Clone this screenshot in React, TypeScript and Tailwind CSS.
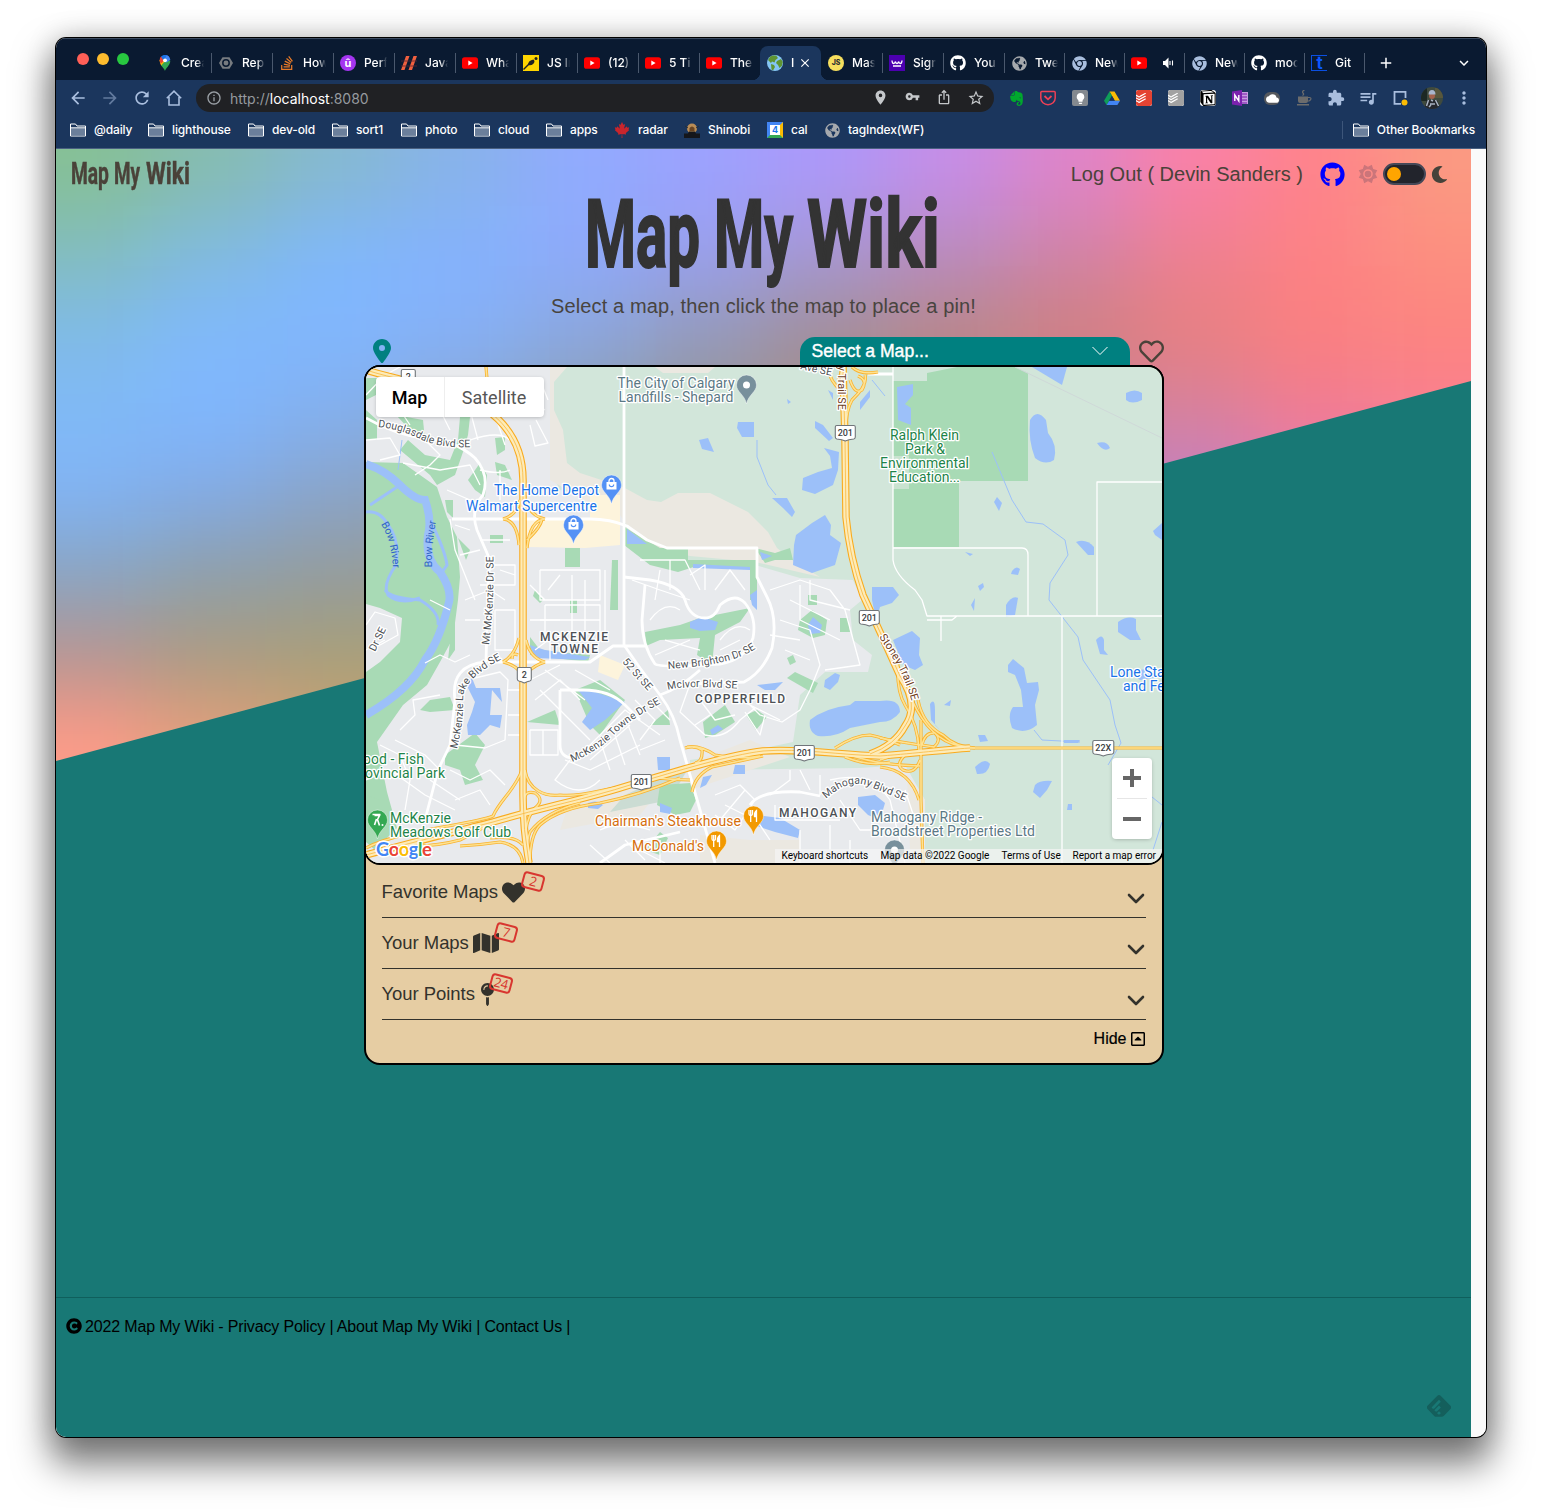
import React from "react";
import {
  FaGithub, FaHeart, FaRegHeart, FaMap, FaMapPin, FaCopyright, FaMoon, FaStackOverflow,
  FaRegCaretSquareUp, FaChrome, FaGlobeAmericas, FaCanadianMapleLeaf,
} from "react-icons/fa";
import { FaLocationDot } from "react-icons/fa6";
import {
  MdArrowBack, MdArrowForward, MdRefresh, MdInfoOutline, MdLocationOn, MdVpnKey,
  MdIosShare, MdStarOutline, MdExtension, MdQueueMusic, MdMoreVert, MdClose, MdAdd, MdExpandMore,
  MdCloud, MdLightbulb,
} from "react-icons/md";
import { SiEvernote, SiTodoist, SiNotion, SiFeedly } from "react-icons/si";

const YouTube = () => (
  <svg viewBox="0 0 16 16" className="size-4"><rect y="2.2" width="16" height="11.6" rx="2.6" fill="#f00" /><path d="M6.3 5.6v4.8L10.6 8z" fill="#fff" /></svg>
);
const Github = () => <FaGithub className="size-4 text-white" />;
const ChromeIcon = () => <FaChrome className="size-[15px] text-[#a9bede]" />;
const Globe = () => <FaGlobeAmericas className="size-[15px] text-[#a6a9ad]" />;

const MapsPin = () => (
  <svg viewBox="0 0 16 16" className="size-4">
    <path d="M8 16c.5-2.600 5.200-5.500 5.300-10.200L8 5.500 3.900 10.200C5.600 12.300 7.500 14 8 16z" fill="#34a853" />
    <path d="M2.700 5.300C2.700 7.500 3.200 9 4.200 10.500L10 4 5.500 1z" fill="#fbbc04" />
    <path d="M2.700 5.300C2.700 3.500 3.200 2.400 4 1.600L8 5 4 8.500C3 7.500 2.700 6.500 2.700 5.300z" fill="#ea4335" />
    <path d="M4 1.600C6-.6 10-.5 12 1.700L7 6.500z" fill="#1a73e8" />
    <path d="M9.500.3c2 .5 3.400 2 3.800 4.600L9.500 7.500 7.500 5z" fill="#4285f4" />
    <circle cx="8" cy="5.300" r="1.900" fill="#fff" />
  </svg>
);

const tabs: { icon: React.ReactNode; label: string; wide: boolean; active?: boolean; noLine?: boolean; audio?: boolean }[] = [
  { icon: <MapsPin />, label: "Creat", wide: true },
  { icon: <svg viewBox="0 0 16 16" className="size-4"><path d="M4.500 2.200h7L15 8l-3.500 5.800h-7L1 8z" fill="#777b80" /><circle cx="8" cy="8" r="3.200" fill="none" stroke="#0a1a31" strokeWidth="1.500" /></svg>, label: "Rep", wide: true },
  { icon: <FaStackOverflow className="size-4 text-[#e87a28]" />, label: "How", wide: true },
  { icon: <span className="flex size-4 items-center justify-center rounded-full bg-[#a435f0] font-['Inter'] text-[11px] font-bold leading-none text-white">û</span>, label: "Perf", wide: true },
  { icon: <svg viewBox="0 0 16 16" className="size-4"><path d="M5 1h3.500L3.500 15H0zM12.500 1H16l-5 14H7.500z" fill="#f0603f" /><path d="M0 6h16M0 11h16" stroke="#5c2630" strokeWidth=".8" /></svg>, label: "Java", wide: true },
  { icon: <YouTube />, label: "Wha", wide: true },
  { icon: <svg viewBox="0 0 16 16" className="size-4"><path d="M0 0h16v16H0z" fill="#ffd500" /><path d="M.5 14.500L8 7" stroke="#222" strokeWidth="1.500" /><path d="M5 10c0-3 2-5 5.500-5.500L11.500 6c0 3-3 5-6.500 4z" fill="#222" /><circle cx="13" cy="3.500" r="1.500" fill="#222" /></svg>, label: "JS In", wide: true },
  { icon: <YouTube />, label: "(12)", wide: true },
  { icon: <YouTube />, label: "5 Ti", wide: true },
  { icon: <YouTube />, label: "The", wide: true, noLine: true },
  { icon: <svg viewBox="0 0 16 16" className="size-4"><circle cx="8" cy="8" r="8" fill="#84c5f4" /><path d="M3 1.800C5 .4 8 .2 9.500 1L11 3 8.500 5 7.500 7.500 5 6.500 4 8 1 5zM10 6l4-2 1.800 3-1 4-2.300 2L11 10 9 8zM4 9l3 1 1 2-2 3.400-1.500-1z" fill="#5f9432" /></svg>, label: "I", wide: true, active: true, noLine: true },
  { icon: <span className="flex size-4 items-center justify-center rounded-full bg-[#f7df5e] font-['Inter'] text-[7px] font-extrabold text-[#333]">JS</span>, label: "Mas", wide: true },
  { icon: <svg viewBox="0 0 16 16" className="size-4"><path d="M0 0h16v16H0z" fill="#4c00b0" /><path d="M3 5.500q.2 3 1.500 3t2-2q.2 2 1.500 2t1.500-2q.7 2 2 2t1.500-3M4 11h8" fill="none" stroke="#fff" strokeWidth="1.300" /></svg>, label: "Sign", wide: true },
  { icon: <Github />, label: "You", wide: true },
  { icon: <Globe />, label: "Twe", wide: false },
  { icon: <ChromeIcon />, label: "New", wide: false },
  { icon: <YouTube />, label: "", wide: false, audio: true },
  { icon: <ChromeIcon />, label: "New", wide: false },
  { icon: <Github />, label: "mod", wide: false },
  { icon: <span className="flex size-4 items-center justify-center border border-[#0b4fe0] border-r-0 font-['Inter'] text-[17px] font-bold leading-none text-[#0b57ff]">t</span>, label: "Git", wide: false },
];

function TabStrip() {
  return (
    <div className="flex h-[42px] border-t border-[#3a4a60] bg-[#0a1a31] pl-[21px]">
      <div className="flex h-[41px] w-[73px] shrink-0 items-center gap-2 pb-px">
        <span className="size-3 rounded-full bg-[#ff5f57]" />
        <span className="size-3 rounded-full bg-[#febc2e]" />
        <span className="size-3 rounded-full bg-[#28c840]" />
      </div>
      {tabs.map((t, i) => (
        <div key={i} className={`flex shrink-0 items-end ${t.wide ? "w-[61px]" : "w-[60px]"}`}>
          <div className={`relative flex h-[34px] w-full items-center rounded-t-lg pl-[7px] ${t.active ? "bg-[#1b365d]" : ""}`}>
            {t.active && (
              <>
                <span className="absolute -left-2 bottom-0 size-2 bg-[radial-gradient(circle_at_0_0,transparent_8px,#1b365d_8.5px)]" />
                <span className="absolute -right-2 bottom-0 size-2 bg-[radial-gradient(circle_at_100%_0,transparent_8px,#1b365d_8.5px)]" />
              </>
            )}
            <span className="flex size-4 shrink-0 items-center justify-center">{t.icon}</span>
            {t.audio ? (
              <svg viewBox="0 0 14 14" className="ml-[14px] size-[14px]"><path d="M2 5h2l3.500-3.500v11L4 9H2z" fill="#fff" /><path d="M9 5v4M11.500 4.500v5" stroke="#fff" strokeWidth="1.100" /></svg>
            ) : (
              <span className={`ml-2 overflow-hidden whitespace-nowrap font-['Inter'] text-[12px] font-medium text-white [mask-image:linear-gradient(90deg,#000_65%,transparent)] ${t.active ? "w-1" : "w-[23px]"}`}>
                {t.label}
              </span>
            )}
            {t.active && <MdClose className="ml-[3px] size-[14px] text-white" />}
            {!t.noLine && <span className="absolute -right-px top-[7px] h-5 w-px bg-[#4a586d]" />}
          </div>
        </div>
      ))}
      <MdAdd className="ml-[13px] mt-[15px] size-[18px] text-white" />
      <MdExpandMore className="ml-[60px] mt-[15px] size-[18px] text-white" />
    </div>
  );
}

const Drive = () => (
  <svg viewBox="0 0 16 16" className="size-4"><path d="M5.500 1.500h5L16 10.800h-5.200z" fill="#fbbc04" /><path d="M5.500 1.500L0 10.800l2.600 4.100L8 5.800z" fill="#0f9d58" /><path d="M5.200 10.800H16l-2.600 4.100H2.600z" fill="#4285f4" /><path d="M8 5.800l2.800 5H5.200z" fill="#1b365d" /></svg>
);

const extensions = [
  <SiEvernote className="size-[15px] text-[#00a82d]" />,
  <svg viewBox="0 0 16 16" className="size-4" fill="none" stroke="#ee4056" strokeWidth="1.500"><path d="M.8 2.500q0-1 1-1h12.400q1 0 1 1V8A7.200 6.700 0 0 1 .8 8z" /><path d="M4.500 6L8 9.300 11.500 6" strokeWidth="1.800" /></svg>,
  <span className="flex size-4 items-center justify-center rounded-[2px] bg-[#84898f]"><MdLightbulb className="size-[13px] text-white" /></span>,
  <Drive />,
  <SiTodoist className="size-4 rounded-[2px] bg-white text-[#e44332]" />,
  <SiTodoist className="size-4 rounded-[2px] bg-white text-[#a2a2a2]" />,
  <SiNotion className="size-4 rounded-[3px] bg-white text-black" />,
  <svg viewBox="0 0 16 16" className="size-4"><path d="M9 2h7v12H9z" fill="#c79be0" /><path d="M9 4h6M9 7h6M9 10h6M9 13h6" stroke="#7719aa" strokeWidth="1" /><path d="M0 1.500L10 0v16L0 14.500z" fill="#7b22ae" /><path d="M2.800 11V5l4 6V5" fill="none" stroke="#fff" strokeWidth="1.400" /></svg>,
  <span className="flex h-[13px] w-4 items-center justify-center rounded-[6px] bg-[#55585d]"><MdCloud className="size-[13px] text-white" /></span>,
  <svg viewBox="0 0 16 16" className="size-4" fill="#6c6c6c"><path d="M2 6.500h10V11q0 2-2 2H4q-2 0-2-2zM1 14h12v1.500H1z" /><path d="M12 7.500h1.500q1.500 0 1.500 1.300T13 11h-1.500" fill="none" stroke="#6c6c6c" strokeWidth="1.200" /><path d="M8.500 0q-3 1.500-1.500 3t-.5 2.500" fill="none" stroke="#6c6c6c" strokeWidth="1.200" /></svg>,
  <MdExtension className="size-[18px] text-[#a9bede]" />,
  <MdQueueMusic className="size-5 text-[#a9bede]" />,
  <svg viewBox="0 0 16 16" className="size-4"><path d="M13.500 8V1.900H2.500v12H9" fill="none" stroke="#a9bede" strokeWidth="1.800" /><circle cx="12.500" cy="12.500" r="3" fill="#fbbc04" /></svg>,
  <svg viewBox="0 0 22 22" className="size-[22px]"><defs><clipPath id="av"><circle cx="11" cy="11" r="11" /></clipPath></defs><g clipPath="url(#av)"><path d="M0 0h22v22H0z" fill="#3f4a3e" /><path d="M0 0h6v14H0z" fill="#1c2824" /><path d="M14 1h8v10h-8z" fill="#58573c" /><path d="M3 22l3-9h10l4 9z" fill="#25272d" /><circle cx="11" cy="9" r="3" fill="#a5634e" /><path d="M7.500 7.500q0-4.500 3.500-4.500t3.500 4.500z" fill="#a9b5cc" /><path d="M7.500 13l-2 6M14.500 13l3 6M10 13l2 1M9 17h5M8 20l2-2" stroke="#aab4c2" strokeWidth="1.500" /></g></svg>,
  <MdMoreVert className="size-5 text-[#a9bede]" />,
];

function AddressBar() {
  return (
    <div className="flex h-[36px] items-center bg-[#1b365d] pl-[12px] text-[#a9bede]">
      <span className="flex w-8"><MdArrowBack className="size-5" /></span>
      <span className="flex w-8 opacity-50"><MdArrowForward className="size-5" /></span>
      <span className="flex w-8"><MdRefresh className="size-5" /></span>
      <span className="flex w-8 pl-[2px]"><svg viewBox="0 0 16 16" className="size-4"><path d="M.8 8.200L8 1.200l7.200 7M3 7v8h10V7" fill="none" stroke="#a9bede" strokeWidth="1.600" /></svg></span>
      <div className="flex h-7 w-[798px] items-center rounded-full bg-[#202124] pl-[10px] text-[#c4c7ca]">
        <MdInfoOutline className="size-4 text-[#9aa0a6]" />
        <span className="ml-2 whitespace-nowrap font-['Inter'] text-[14px] text-[#969a9f]">http://<span className="text-white">localhost</span>:8080</span>
        <div className="ml-auto flex w-[128px] *:flex *:w-8 *:justify-center">
          <span><MdLocationOn className="size-[17px]" /></span>
          <span><MdVpnKey className="size-[15px]" /></span>
          <span><MdIosShare className="size-4" /></span>
          <span><MdStarOutline className="size-[18px]" /></span>
        </div>
        <span className="w-[2px]" />
      </div>
      <div className="ml-[6px] flex">
        {extensions.map((e, i) => <span key={i} className="flex w-8 items-center justify-center">{e}</span>)}
      </div>
    </div>
  );
}

const Folder = () => (
  <svg viewBox="0 0 16 14" className="h-[14px] w-4"><path d="M.5 1h5l1.500 2h8.500v10H.5z" fill="#1b365d" stroke="#fff" /><path d="M1 5h14v7.500H1z" fill="#6b7f9b" /><path d="M.5 4.800h15" stroke="#fff" /></svg>
);

const Shinobi = () => (
  <svg viewBox="0 0 16 16" className="size-4"><circle cx="8" cy="6.500" r="5" fill="#b98c55" /><path d="M5.500 9V6q2.500-3 5 0v3z" fill="#6a4522" /><path d="M0 11.500h4l1-2h6l1 2h4V16H0z" fill="#14161b" /><path d="M1 4l3 2M15 4l-3 2" stroke="#252d38" /></svg>
);
const Cal = () => (
  <span className="flex size-4 items-center justify-center border-[3px] border-b-[#34a853] border-l-[#4285f4] border-r-[#fbbc04] border-t-[#4285f4] bg-white font-['Inter'] text-[9px] font-bold text-[#1a73e8]">4</span>
);

function Bookmarks() {
  return (
    <div className="flex h-[33px] items-center whitespace-nowrap border-b border-[#4a6080] bg-[#1b365d] pb-1 pl-[14px] font-['Inter'] text-[12px] font-medium tracking-[-0.12px] text-white">
      <span className="flex w-[78px] items-center gap-2"><Folder />@daily</span>
      <span className="flex w-[100px] items-center gap-2"><Folder />lighthouse</span>
      <span className="flex w-[84px] items-center gap-2"><Folder />dev-old</span>
      <span className="flex w-[69px] items-center gap-2"><Folder />sort1</span>
      <span className="flex w-[73px] items-center gap-2"><Folder />photo</span>
      <span className="flex w-[72px] items-center gap-2"><Folder />cloud</span>
      <span className="flex w-[68px] items-center gap-2"><Folder />apps</span>
      <span className="flex w-[70px] items-center gap-2"><FaCanadianMapleLeaf className="size-4 text-[#c9252c]" />radar</span>
      <span className="flex w-[83px] items-center gap-2"><Shinobi />Shinobi</span>
      <span className="flex w-[57px] items-center gap-2"><Cal />cal</span>
      <span className="flex items-center gap-2"><span className="flex w-4 justify-center"><Globe /></span>tagIndex(WF)</span>
      <span className="ml-auto flex items-center gap-2 border-l border-[#3d567a] pl-[10px] pr-[11px]"><Folder />Other Bookmarks</span>
    </div>
  );
}

const meshColors = [
  "#86c095", "#86bcb0", "#86b9d0", "#88b3ea", "#91abff", "#9ca2ff", "#ad98fb", "#c68ee9", "#df84cb", "#fa81a8", "#ff838c", "#fb9a82",
  "#83bdc0", "#81bbe0", "#80b8fc", "#84b3ff", "#8eabfc", "#9aa0ee", "#a698d4", "#ba8cc0", "#d084a8", "#ee8092", "#fe8285", "#fd9080",
  "#80bbe8", "#80b9fc", "#81b7ff", "#86b1f8", "#8ba8e0", "#949bbc", "#a28f9a", "#b78788", "#cf8080", "#e88080", "#fb8080", "#fd8480",
  "#80baf8", "#80b7ff", "#84b0ee", "#8aa8d4", "#8e9fb4", "#979598", "#a88c8a", "#be8488", "#d2809a", "#d682a0", "#f07c94", "#fb8090",
  "#82b3f4", "#84abe4", "#8aa4c8", "#8e9fb4", "#8e9fb4", "#979598", "#a88c8a", "#be84a8", "#c280c8", "#c080c4", "#e07ab8", "#ec7cb0",
  "#8aa5c0", "#8f9fa8", "#959c9c", "#9a9a90", "#a09a88", "#979598", "#a88c8a", "#be84a8", "#c280c8", "#c080c4", "#e07ab8", "#ec7cb0",
  "#b89590", "#ac9c80", "#a8a078", "#a8a078", "#a8a078", "#979598", "#a88c8a", "#be84a8", "#c280c8", "#c080c4", "#e07ab8", "#ec7cb0",
  "#ff9c88", "#e6a07c", "#d0a274", "#c4a270", "#a8a078", "#979598", "#a88c8a", "#be84a8", "#c280c8", "#c080c4", "#e07ab8", "#ec7cb0",
];

function Backdrop() {
  return (
    <div className="absolute inset-x-0 top-0 h-[612px] overflow-hidden [clip-path:polygon(0_0,100%_0,100%_232px,0_612px)]">
      <div className="grid h-full w-full scale-x-[1.04] scale-y-[1.06] grid-cols-12 grid-rows-8 blur-[38px]">
        {meshColors.map((c, i) => {
          const col = i % 12;
          const row = Math.floor(i / 12);
          return (
            <span
              key={i}
              className={`${col === 0 ? "-ml-24" : ""} ${col === 11 ? "-mr-24" : ""} ${row === 0 ? "-mt-24" : ""} ${row === 7 ? "-mb-24" : ""}`}
              style={{ background: c }}
            />
          );
        })}
      </div>
    </div>
  );
}

const Pin = ({ x, y, color, children }: { x: number; y: number; color: string; children?: React.ReactNode }) => (
  <g transform={`translate(${x + 0.5} ${y})`}>
    <path d="M0 29C-1.500 20-10 17-10 10A10 10 0 0 1 10 10C10 17 1.500 20 0 29z" fill={color} stroke="#fff" strokeOpacity=".6" strokeWidth=".7" />
    {children}
  </g>
);
const Bag = () => <g><path d="M-5 7h10v7.500H-5z" fill="#fff" /><path d="M-2.500 7.500V6a2.500 2.500 0 0 1 5 0v1.500" fill="none" stroke="#fff" strokeWidth="1.300" /><path d="M-2.200 9.500a2.200 2.200 0 0 0 4.400 0" fill="none" stroke="#5491f5" strokeWidth="1.200" /></g>;
const Fork = () => <g fill="none" stroke="#fff" strokeWidth="1.300"><path d="M-4.500 4v4q0 1.500 1.700 1.500T-1 8V4M-2.800 4v12" /><path d="M3 16V4.500q-2.500 2-2 6h2" fill="#fff" /></g>;
const Shield = ({ x, y, t, w = 20 }: { x: number; y: number; t: string; w?: number }) => (
  <g transform={`translate(${x + 0.3} ${y})`}>
    <path d={`M${-w / 2} -6q0-1.500 1.500-1.500H${w / 2 - 1.5}q1.500 0 1.500 1.500V4q0 1.500-1.500 2Q3 6.500 0 8 -3 6.500 ${-w / 2 + 1.5} 6q-1.500-.5-1.500-2z`} fill="#fff" stroke="#70757a" strokeWidth="1.100" />
    <text y="3.300" textAnchor="middle" fontSize="9" fontWeight="500" fill="#3c4043">{t}</text>
  </g>
);

const motorways = [
  "M366 370C390 378 430 385 460 395C500 412 523 440 523 480V640L523 795Q523 830 529 863",
  "M366 855C410 843 450 833 493 822C540 808 590 798 630 785C680 770 730 755 763 751C800 748 840 755 880 756C920 753 940 750 970 748",
  "M843 367L845 440 846 517C849 550 856 575 863 595L880 632 900 676Q920 705 905 726Q895 745 870 754",
];
const ramps = [
  "M970 748H1162",
  "M486 367Q487 385 492 400", "M503 519Q517 520 519 545M503 519Q517 515 520 500M545 519Q530 520 527 548M545 519Q530 516 526 500M527 540Q541 527 542 519",
  "M503 662Q515 655 519 638M503 662Q515 665 520 672M545 662Q530 658 526 640M545 662Q535 665 528 672M518 655q-6-3-6 4",
  "M522 770C515 790 500 800 493 816C470 825 400 830 366 848M525 770C528 790 545 797 560 795C580 797 600 790 640 783",
  "M493 822Q480 830 460 840Q430 848 400 845M523 845Q515 835 490 838M530 863Q530 835 540 825Q560 808 600 803Q640 795 680 778M526 830Q528 815 535 808Q545 800 535 793Q525 790 524 800",
  "M528 863Q525 845 530 832Q545 812 580 803M523 863Q520 845 500 842Q480 845 460 846",
  "M650 777Q670 780 690 780M685 748Q695 745 702 750Q703 762 695 763M687 747Q700 745 715 755Q740 760 760 756M692 792Q695 775 712 767L763 756",
  "M835 748Q855 735 870 735Q885 738 900 745M853 756Q880 765 920 766M845 757Q870 767 890 762",
  "M844 367L838 380M832 367Q825 375 840 390M850 380Q855 395 862 390Q868 380 858 376M865 375Q868 385 852 400Q846 410 846 430M852 367Q860 375 878 372",
  "M898 660Q896 690 905 705Q918 725 919 750M918 700Q923 725 943 735Q955 747 975 748M912 700Q930 740 960 746M921 720V800L923 863M880 738Q900 742 920 745M880 760Q900 752 925 752M880 767Q910 770 919 800M905 755Q895 765 903 770Q915 775 920 760M922 745Q925 732 935 733Q942 740 934 747Z",
];
const whiteMajor = [
  "M624 367V645L640 668 660 695Q675 715 680 740L700 810 715 863", "M452 519H590Q610 519 627 526L647 540 667 548H757V577L767 597Q778 618 772 648Q763 672 744 682L690 684",
  "M488 662H590L613 646H645", "M366 418Q395 435 427 439Q455 440 475 458Q490 475 483 495Q470 510 477 530L490 560 488 585 486 662",
  "M624 577L650 580Q680 585 685 600Q690 618 705 618Q715 618 720 605Q735 592 745 603Q757 618 753 638Q745 660 720 664Q660 668 655 664Q642 645 642 620L645 585",
  "M486 662Q450 665 455 700L450 745 438 770 425 820", "M560 690H583Q610 690 625 705L640 720",
  "M560 690V745Q560 760 580 758", "M600 863L625 845 680 832 M750 805Q760 790 800 792L820 796",
  "M868 374H893", "M660 695Q680 688 700 670",
];
const whiteMinor = [
  "M893 367V560Q895 575 915 590L922 600 927 616H1162M893 548H1022Q1028 548 1028 555V616M1097 616V482H1162M1062 616V863M927 620H952L957 616M941 616V641",
  "M366 395L385 375 400 367M376 400L400 410 410 425M366 440L390 438 400 455 380 460M410 395L440 410 450 430M440 400L470 410 478 440M425 440L440 455 430 465 415 475M403 463L440 470 470 465 480 485",
  "M470 440Q500 430 510 440M490 400L505 445M500 470V500M480 470Q500 475 510 470M447 490L470 500 475 515M450 519L455 550 465 575 475 600M480 540L510 540M490 565H515V585H480M455 525L470 530M460 555L480 550",
  "M425 663L440 655 455 662 470 655M475 678L500 672 508 680 505 740 485 748 455 745M508 690H520M508 715H520M508 735H520M366 780L390 770 425 795 455 810",
  "M400 730L415 715 413 700 440 695M380 745L400 755 410 780 405 810M395 740L425 755 440 770M450 770L470 780 490 770 505 785M455 800L480 790 490 805M430 780L460 800",
  "M536 420L548 443 535 446 530 425M540 380L548 400M530 400L545 410",
  "M540 570H600V600H540V570M548 590L560 575M545 605H600V640H545V605M572 575V645M585 580V630M540 620H600M605 570V640M550 640V660M530 585L545 600",
  "M530 620H560M535 650L555 635M530 680L560 665M535 700L560 680 580 700M540 690L590 740M545 670L585 700M575 670L610 690M530 730H558V755H530V730M543 730V755M565 760L590 770 640 745M585 750L625 710 660 735M590 760L630 725M600 780Q580 800 555 780L570 760M640 750L665 740M610 770L600 740M625 765L615 735M640 755L628 725",
  "M632 580L660 590 690 600M640 560L685 560 700 590M660 570L655 600M670 560V590M690 575L705 565V590M715 590L730 570 745 590M650 620Q665 600 680 610M720 640Q735 620 750 630M720 650L740 640M665 640L700 650M655 655L690 640",
  "M770 590L800 580 830 590 845 610 860 665 825 670M800 585V620L840 640M810 580V600L850 610M780 620L810 630 820 665 810 690 800 710 782 722 760 715 745 700M790 600L830 620M770 635L800 640M785 650L810 660M740 700L780 720M690 684L680 712 705 735Q725 740 740 720L755 708M700 700L715 720 735 715M745 712L760 735 765 715M695 725L710 715",
  "M640 850L665 863M660 840V863M645 860L625 840M715 795L740 785 755 800 735 830 715 815M725 805L745 815M720 820L745 790M750 810L770 840M770 795L790 780V770M800 770L810 790M820 775V795M830 780Q870 770 890 800M775 805V820H840M840 800L860 830 900 830M800 830V863M830 825V850M850 840V863M890 800L905 863M905 790L915 820",
  "M366 625L375 612 395 618 398 635 380 645M366 650L385 640M430 600L450 610M465 600L490 590 505 600M465 620H480M495 610H515V650H495V610M500 570L515 575",
  "M635 700L655 720 640 740M650 700L670 720M600 830Q620 820 650 830M590 845L610 863",
];
const greens = [
  "M366 462L403 463 437 487 447 517 457 537 460 577 458 600 453 638 440 662 427 685 403 705 377 742 387 792 397 828 375 850 366 842V672L380 662 400 642 402 618 380 608 366 604z",
  "M366 410L377 420 377 440 366 440z", "M366 378L385 378 376 395 366 400z", "M396 415L410 430 425 440 423 420z", "M460 417H470L468 435 463 452 455 475 437 485 430 475 400 450 408 440 425 455 450 460 458 440z",
  "M468 480L480 463 487 475 485 497 475 490z", "M495 438L505 437 505 450 497 455z", "M495 462L505 465 512 480 497 475z", "M445 500H453V518L447 512z", "M490 535H503V543H490z", "M565 548H580V567H565z",
  "M458 538L470 550 466 560z", "M893 381H927V373L957 367H1015L1028 373V481H959V547H893z",
  "M624 527L660 548H688V560H757V600H750V568L700 565 678 572 650 565 624 545z", "M755 548L775 553 790 548 793 560 775 560 765 563z",
  "M645 632L680 625 700 618 730 612 750 608 740 622 715 635 712 665 697 655 700 638 660 640 646 646z",
  "M800 620L812 610 827 620 825 635 813 638 798 630z", "M808 595H817V605H808z", "M795 672L818 683 813 693 787 678z", "M787 658L793 655 796 662 790 665z", "M746 715L757 710 767 717 756 730z",
  "M703 722L725 705 735 722 715 735 705 738z", "M840 618L848 618 850 632 840 632z", "M445 755L475 733 485 745 475 765 483 780 465 785 460 770 445 765z",
  "M527 722L555 710 560 725z", "M530 637L540 650 590 655 588 662 530 655z", "M660 785L690 783 696 800 690 812 675 815 657 805z", "M645 850L660 832 668 838 660 855z", "M650 725L668 710 670 725z",
  "M610 610H618V560H612z", "M575 690L600 680 625 700 600 735 590 725z", "M366 795L380 800 385 820 372 830z", "M455 595V650L448 660zM420 710L430 700 450 697 455 710 430 712z", "M535 590L543 600 540 603 533 596zM570 600H577V613H570z",
];
const waters = [
  "M738 422H754V437H742L737 428z", "M699 440L708 438 714 452 702 449z", "M787 399L788 404 791 402zM815 421L823 425 833 438 829 441 815 428z", "M824 448L839 452 838 470 833 485 815 494 802 490 803 478 818 472 832 468 830 456z",
  "M772 498H787L795 512 792 517 783 508z", "M796 535L812 523 825 515 831 525 830 535 841 543 835 565 812 573 793 565 794 545z", "M897 387L913 384V395L905 404 911 408V425L898 420z",
  "M1030 420Q1037 408 1046 420L1048 433Q1058 445 1054 460Q1045 466 1035 458Q1028 440 1030 420z", "M1032 367H1067L1062 385z", "M1126 393Q1135 388 1142 393V400Q1132 405 1126 400z", "M1097 443Q1107 440 1110 448Q1104 453 1097 443z",
  "M994 502L997 497 1002 503 999 511z", "M1076 542Q1086 538 1094 547V555L1088 555z", "M1153 531L1162 523V540L1155 535z", "M1012 571Q1016 565 1020 569L1018 575 1011 574zM978 586L983 583 984 587 980 591zM965 552L973 554 970 556z",
  "M872 587H893L899 595 892 603 880 607 876 620 872 600z", "M893 640L912 631 920 638 919 655 923 665 915 670 903 665z", "M1008 665L1013 659 1024 668 1027 683 1038 682 1039 690 1035 705 1037 725Q1025 735 1012 728Q1007 715 1013 707L1023 707 1021 690 1015 675 1008 672z",
  "M930 704Q935 697 935 710L935 725 940 730 931 720z", "M975 767Q985 757 990 764Q988 775 977 774z", "M1035 785Q1040 780 1052 781L1047 790 1040 798 1033 792z", "M1118 622Q1128 615 1136 619V630L1141 640 1130 640 1118 632z", "M1096 640Q1102 633 1104 640V650L1108 655 1100 654z",
  "M1006 605Q1012 595 1018 598L1015 615 1006 617z", "M971 605L975 598 974 611zM944 705L951 700 950 706z", "M1064 740H1080L1078 743 1064 743z", "M978 735H985L988 741 980 742z", "M810 720Q825 708 850 705L855 701H880Q900 698 900 712Q893 722 880 722L850 728Q835 738 818 736Q808 732 810 720z",
  "M466 684L472 678 476 688 500 688 502 702 492 690 490 715 502 715 500 728 490 725 480 735 468 735 467 725 472 712 475 702z", "M627 529L647 544H627z", "M693 564L750 567V570L693 568z", "M760 552L772 556 762 560z",
  "M690 622L702 617 718 622 715 630 700 631 690 628z", "M808 625L813 617 822 625 820 633 810 634z", "M757 685L783 682 775 690 765 690z", "M578 690L595 692 625 702 605 720 590 730 582 722 592 708z", "M530 645L545 650 590 657 585 660 535 658z",
  "M825 680L835 673 840 675 838 682 830 690 824 687z", "M757 815L780 818 800 830 798 838 775 832 757 826z", "M858 797L875 795 885 803 880 820 868 815 858 805z", "M657 757H670V770H658zM735 765L745 765V774H733zM703 777L712 775 706 785 700 788z", "M660 803L672 808 670 814 660 812z", "M588 803Q597 799 603 805L598 809 588 808z",
  "M1130 672L1150 668 1155 678 1140 680z", "M1068 804H1072V810H1067z", "M750 595L757 590 757 610 752 605zM710 730L718 725 723 729 712 735z",
  "M860 402L870 390 870 397 860 410z", "M840 395L846 390 842 408zM828 390L833 393 833 400z",
];

const streetLabels = [
  ["l1", "Douglasdale Blvd SE"], ["l4", "Mt McKenzie Dr SE"], ["l5", "McKenzie Lake Blvd SE"], ["l6", "Dr SE"],
  ["l7", "New Brighton Dr SE"], ["l8", "McIvor Blvd SE"], ["l9", "52 St SE"], ["l10", "McKenzie Towne Dr SE"],
  ["l11", "Mahogany Blvd SE"], ["l14", "Ave SE"],
];

function CityMap() {
  const halo = { paintOrder: "stroke", stroke: "#fff", strokeWidth: 2.6, strokeLinejoin: "round" as const };
  return (
    <svg viewBox="366 367 796 496" className="h-[496px] w-[796px]" fontFamily="Roboto, sans-serif">
      <path d="M366 367h796v496H366z" fill="#d2e6da" />
      <path d="M366 367H550V470L560 490 623 500 625 545 690 563 755 565 800 578 853 580 862 600 850 610 853 640 872 655 868 672 825 672 800 695 793 742 745 752 690 760V770L860 768 905 765 925 800V863H366z" fill="#e8eaed" />
      <path d="M550 367H567L554 382V410L563 430 567 463 580 473 623 487 647 500 661 502 678 493H710L748 512 768 532 777 548 792 560 820 577 755 562 690 556 640 545 620 515 585 500 550 480zM655 367H715L708 373H663zM685 765L750 740 790 757 690 790zM750 840H800V863H700V835zM907 775L925 800 921 863 910 850zM570 800L620 790 660 790 640 815 560 830z" fill="#ebe8e1" />
      <path d="M527 547V520H590V495H620V545L585 548zM600 655L625 665 618 680 598 672z" fill="#fdf4dc" />
      <path d="M625 795L690 765 670 800 610 812z" fill="#cbdcd3" />
      <g fill="#a8dab5">{greens.map((d) => <path key={d} d={d} />)}</g>
      <path d="M893 456H909V489H893z" fill="#c9e3d0" />
      <g fill="#9cc0f9">{waters.map((d) => <path key={d} d={d} />)}</g>
      <g fill="none" stroke="#9cc0f9">
        <path d="M366 464Q385 470 400 485T425 500Q432 520 428 535Q425 560 440 572Q452 590 449 602Q440 640 425 660Q410 690 366 715" strokeWidth="8" />
        <path d="M366 512Q380 510 388 525Q400 540 396 565Q382 585 388 595Q400 605 420 598M385 590Q390 598 420 600Q440 612 438 625M430 520Q445 550 447 565L440 575M400 485L370 505" strokeWidth="3" />
        <path d="M757 440V457L768 485 776 495M992 452L1012 500 1026 522 1043 524 1065 540 1068 555 1050 583 1049 600 1078 637 1083 660 1110 700 1115 725 1121 743 1108 765M1034 730L1042 740 1080 742M398 470L402 440M872 380L885 396M1162 805L1152 797M1162 822L1153 850" strokeWidth="1" />
      </g>
      <path d="M1015 367L1162 438" stroke="#cfd8d8" fill="none" />
      <g fill="none" stroke="#fff" strokeLinejoin="round">
        {whiteMinor.map((d) => <path key={d} d={d} strokeWidth="1.300" />)}
        {whiteMajor.map((d) => <path key={d} d={d} strokeWidth="2.800" />)}
      </g>
      <g fill="none" strokeLinejoin="round">
        {ramps.map((d) => <path key={d} d={d} stroke="#f9b32f" strokeWidth="3.200" />)}
        {motorways.map((d) => <path key={d} d={d} stroke="#f9ab1e" strokeWidth="7.500" />)}
        {ramps.map((d) => <path key={d} d={d} stroke="#fde293" strokeWidth="1.600" />)}
        {motorways.map((d) => <path key={d} d={d} stroke="#fdebb8" strokeWidth="5.300" />)}
        {motorways.map((d) => <path key={d} d={d} stroke="#f9b940" strokeWidth=".8" />)}
      </g>
      <Shield x={408} y={377} t="2" w={14} /><Shield x={524} y={675} t="2" w={14} /><Shield x={845} y={433} t="201" /><Shield x={869} y={618} t="201" />
      <Shield x={804} y={753} t="201" /><Shield x={641} y={782} t="201" /><Shield x={1103} y={748} t="22X" w={21} />
      <Pin x={746} y={375} color="#78909c"><circle cy="10" r="3.500" fill="#fff" /></Pin>
      <Pin x={611} y={475} color="#5491f5"><Bag /></Pin>
      <Pin x={573} y={515} color="#5491f5"><Bag /></Pin>
      <Pin x={753} y={806} color="#f29900"><Fork /></Pin>
      <Pin x={716} y={831} color="#f29900"><Fork /></Pin>
      <Pin x={894} y={840} color="#78909c"><circle cy="10" r="3.500" fill="#fff" /></Pin>
      <Pin x={377} y={810} color="#34a853"><path d="M-5 4.500h8M-3 5.500h5l-2 4 2 6M-1 9l-2 6" fill="none" stroke="#fff" strokeWidth="1.600" /><circle cx="5" cy="15" r="1" fill="#fff" /></Pin>
      <defs>
        <path id="l1" d="M378 427Q400 429 420 439T476 447" /><path id="l2" d="M381 524Q394 545 393 580" /><path id="l3" d="M432 567Q431 545 438 510" />
        <path id="l4" d="M489 645Q495 600 493 550" /><path id="l5" d="M457 749Q464 720 463 700T500 660" /><path id="l6" d="M375 652L390 622" />
        <path id="l7" d="M668 669Q700 667 723 662T762 644" /><path id="l8" d="M668 690Q680 685 745 689" /><path id="l9" d="M622 662L655 699" />
        <path id="l10" d="M572 762Q600 750 614 735T667 700" /><path id="l11" d="M826 799Q848 778 868 786T912 804" /><path id="l12" d="M879 637Q895 660 902 675T916 716" />
        <path id="l13" d="M838 360V420" /><path id="l14" d="M800 369L842 378" />
      </defs>
      <g fontSize="10.500" fill="#4d5156" style={halo}>
        {streetLabels.map(([id, t]) => <text key={id}><textPath href={`#${id}`}>{t}</textPath></text>)}
        <text fontSize="11" fill="#70401c"><textPath href="#l12">Stoney Trail SE</textPath></text>
        <text fontSize="11" fill="#70401c"><textPath href="#l13">ey Trail SE</textPath></text>
      </g>
      <g fontSize="10.500" fill="#3165c5"><text><textPath href="#l2">Bow River</textPath></text><text><textPath href="#l3">Bow River</textPath></text></g>
      <g fontSize="14" style={halo}>
        <g fill="#5b7885">
          <text x="617.500" y="388.300" textLength="117">The City of Calgary</text><text x="618.500" y="402.300" textLength="115">Landfills - Shepard</text>
          <text x="871" y="822.300" textLength="111">Mahogany Ridge -</text><text x="871" y="836.300" textLength="164">Broadstreet Properties Ltd</text>
        </g>
        <g fill="#1e8449">
          <text x="890" y="440.300" textLength="69">Ralph Klein</text><text x="905" y="454.300" textLength="40">Park &amp;</text><text x="880" y="468.300" textLength="89">Environmental</text><text x="889" y="482.300" textLength="71">Education...</text>
          <text x="363" y="764.300" textLength="61">ood - Fish</text><text x="365" y="778.300" textLength="80">ovincial Park</text><text x="390" y="823.300" textLength="61">McKenzie</text><text x="390" y="837.300" textLength="121">Meadows Golf Club</text>
        </g>
        <g fill="#1a73e8">
          <text x="494" y="495.300" textLength="105">The Home Depot</text><text x="466" y="511.300" textLength="131">Walmart Supercentre</text><text x="1110" y="677">Lone Sta</text><text x="1123" y="691">and Fe</text>
        </g>
        <g fill="#d56e0c"><text x="595" y="826.300" textLength="146">Chairman's Steakhouse</text><text x="632" y="851.300" textLength="72">McDonald's</text></g>
      </g>
      <g fontSize="12" fontWeight="500" fill="#4d5156" style={halo}>
        <text x="540" y="641.300" textLength="68">MCKENZIE</text><text x="551" y="653.300" textLength="47">TOWNE</text><text x="695" y="703.300" textLength="90">COPPERFIELD</text><text x="779" y="817.300" textLength="77">MAHOGANY</text>
      </g>
      <text x="376" y="856" fontSize="18.500" fontWeight="700" fontFamily="Lato, sans-serif" textLength="56" style={{ ...halo, strokeWidth: 3 }}>
        <tspan fill="#4285f4">G</tspan><tspan fill="#ea4335">o</tspan><tspan fill="#fbbc04">o</tspan><tspan fill="#4285f4">g</tspan><tspan fill="#34a853">l</tspan><tspan fill="#ea4335">e</tspan>
      </text>
    </svg>
  );
}

function MapFrame() {
  return (
    <div className="relative -mx-[2px] -mt-[2px] h-[500px] overflow-hidden rounded-2xl border-2 border-black font-['Roboto']">
      <CityMap />
      <div className="absolute left-[10px] top-[10px] flex h-10 rounded-sm bg-white text-[18px] shadow-[0_1px_4px_-1px_rgba(0,0,0,.3)]">
        <span className="flex w-[69px] items-center justify-center border-r border-[#eee] font-medium text-black">Map</span>
        <span className="flex w-[99px] items-center justify-center text-[#565656]">Satellite</span>
      </div>
      <div className="absolute right-[10px] top-[391px] flex h-[81px] w-10 flex-col items-center rounded-sm bg-white shadow-[0_1px_4px_-1px_rgba(0,0,0,.3)]">
        <span className="relative flex h-10 w-10 items-center justify-center"><span className="h-1 w-[18px] bg-[#666]" /><span className="absolute h-[18px] w-1 bg-[#666]" /></span>
        <span className="h-px w-[30px] bg-[#e6e6e6]" />
        <span className="flex h-10 w-10 items-center justify-center"><span className="h-1 w-[18px] bg-[#666]" /></span>
      </div>
      <div className="absolute bottom-0 right-0 flex h-[14px] items-center bg-[#f5f5f5]/70 pb-px text-[10px] text-black">
        <span className="w-[99px] whitespace-nowrap pl-[7px]">Keyboard shortcuts</span>
        <span className="w-[121px] whitespace-nowrap pl-[7px]">Map data ©2022 Google</span>
        <span className="w-[71px] whitespace-nowrap pl-[7px]">Terms of Use</span>
        <span className="w-[96px] whitespace-nowrap pl-[7px]">Report a map error</span>
      </div>
    </div>
  );
}

const Chevron = () => (
  <svg viewBox="0 0 18 12" className="mr-px mt-[14px] h-3 w-[18px]"><path d="M2 2l7 7 7-7" fill="none" stroke="#33322c" strokeWidth="2.600" strokeLinecap="round" strokeLinejoin="round" /></svg>
);

function Row({ label, icon, count, badge }: { label: string; icon: React.ReactNode; count: string; badge: string }) {
  return (
    <div className="relative flex h-[51px] items-center justify-between border-b border-[#33322c] text-[18.5px] tracking-[-0.05px] text-[#3a382f]">
      <span className="flex items-center gap-1 text-[#33322c]">{label} {icon}</span>
      <span className={`absolute top-[6px] flex h-[17px] w-[22px] rotate-[15deg] items-center justify-center rounded-[4px] border-2 border-[#d8362f] font-['Open_Sans'] text-[13px] leading-none tracking-tight text-[#d8362f] ${badge}`}>{count}</span>
      <Chevron />
    </div>
  );
}

function Sun() {
  return (
    <svg viewBox="-10 -10 20 20" className="size-5">
      {[0, 45, 90, 135, 180, 225, 270, 315].map((a) => <path key={a} d="M-3.300-6L0-10 3.300-6z" transform={`rotate(${a + 22.5})`} fill="#cb757a" />)}
      <circle r="5.800" fill="none" stroke="#cb757a" strokeWidth="2" /><circle r="3.300" fill="#cb757a" />
    </svg>
  );
}

function Brand() {
  return (
    <span className="flex w-[118px] whitespace-nowrap font-['Roboto'] text-[31px] font-bold [-webkit-text-stroke:0.5px_#4a4239]">
      <span className="w-[43px]"><span className="inline-block origin-left scale-x-[0.62]">Map</span></span>
      <span className="w-[32px]"><span className="inline-block origin-left scale-x-[0.61]">My</span></span>
      <span className="w-[43px]"><span className="inline-block origin-left scale-x-[0.73]">Wiki</span></span>
    </span>
  );
}

export default function App() {
  return (
    <div className="h-[1510px] w-[1542px] bg-white pl-[56px] pt-[38px] font-['Liberation_Sans']">
      <div className="h-[1399px] w-[1430px] overflow-hidden rounded-[10px] shadow-[0_0_0_1px_#000,0_22px_36px_6px_rgba(0,0,0,.5),0_0_30px_rgba(0,0,0,.2)]">
        <TabStrip />
        <AddressBar />
        <Bookmarks />
        <div className="flex h-[1288px] bg-[#fafafa]">
          <main className="relative flex w-[1415px] flex-col bg-[#187875]">
            <Backdrop />
            <nav className="relative flex h-[50px] items-center justify-between pl-[15px] pr-[23px] text-[#4a4239]">
              <Brand />
              <div className="flex items-center text-[20px]">
                <span className="mr-[17px] whitespace-nowrap">Log Out ( Devin Sanders )</span>
                <FaGithub className="mr-[13px] size-[25px] text-[#0000ff]" />
                <Sun />
                <span className="ml-[5px] mr-[5px] flex h-[22px] w-[43px] items-center rounded-full border-2 border-[#454857] bg-[#22242c] pl-[2px]"><span className="size-[14px] rounded-full bg-[#ffa500]" /></span>
                <FaMoon className="size-[17px] text-[#45423a]" />
              </div>
            </nav>
            <h1 className="relative mx-auto flex h-[84px] w-[357px] items-start whitespace-nowrap font-['Roboto'] text-[94px] font-bold leading-none text-[#333] [-webkit-text-stroke:2px_#333]">
              <span className="-mt-[11px] w-[129px]"><span className="inline-block origin-left scale-x-[0.62]">Map</span></span>
              <span className="-mt-[11px] w-[93px]"><span className="inline-block origin-left scale-x-[0.61]">My</span></span>
              <span className="-mt-[11px] w-[131px]"><span className="inline-block origin-left scale-x-[0.73]">Wiki</span></span>
            </h1>
            <p className="relative mt-[11px] text-center text-[20px] leading-6 tracking-[0.12px] text-[#48443f]">Select a map, then click the map to place a pin!</p>
            <section className="relative mx-auto mt-[19px] w-[800px]">
              <div className="flex h-7 items-start pl-[9px]">
                <FaLocationDot className="mt-[2px] h-6 w-[18px] text-[#008080]" />
                <div className="ml-auto mr-[9px] flex h-7 w-[330px] items-center justify-between rounded-t-[15px] bg-[#008080] pl-[12px] pr-[21px] text-[17.6px] text-white [-webkit-text-stroke:0.4px_white]">
                  Select a Map...
                  <svg viewBox="0 0 18 10" className="h-[10px] w-[18px]"><path d="M1.500 1L9 8.500 16.500 1" fill="none" stroke="#fff" strokeWidth="1" /></svg>
                </div>
                <FaRegHeart className="mt-[2px] size-[25px] text-[#4a4239]" />
              </div>
              <div className="h-[700px] rounded-2xl border-2 border-black bg-[#e6cda3]">
                <MapFrame />
                <div className="mt-[2px] px-4">
                  <Row label="Favorite Maps" icon={<FaHeart className="size-[23px]" />} count="2" badge="left-[140px]" />
                  <Row label="Your Maps" icon={<FaMap className="size-[26px]" />} count="7" badge="left-[113px]" />
                  <Row label="Your Points" icon={<FaMapPin className="h-[23px] w-[17px]" />} count="24" badge="left-[108px]" />
                  <div className="mt-[7px] flex items-center justify-end gap-[3px] text-[16px] text-black [-webkit-text-stroke:0.2px_black]">Hide <FaRegCaretSquareUp className="size-4" /></div>
                </div>
              </div>
            </section>
            <footer className="relative mt-auto flex h-[140px] items-start border-t border-[#0f5f5c] pl-[10px] pt-[17px] text-[16px] text-black">
              <FaCopyright className="mr-[3px] mt-[3px] size-4" />
              <span className="tracking-[-0.16px]">2022 Map My Wiki - Privacy Policy | About Map My Wiki | Contact Us |</span>
              <SiFeedly className="absolute right-5 top-[96px] size-6 text-[#145f5c]" />
            </footer>
          </main>
        </div>
      </div>
    </div>
  );
}
